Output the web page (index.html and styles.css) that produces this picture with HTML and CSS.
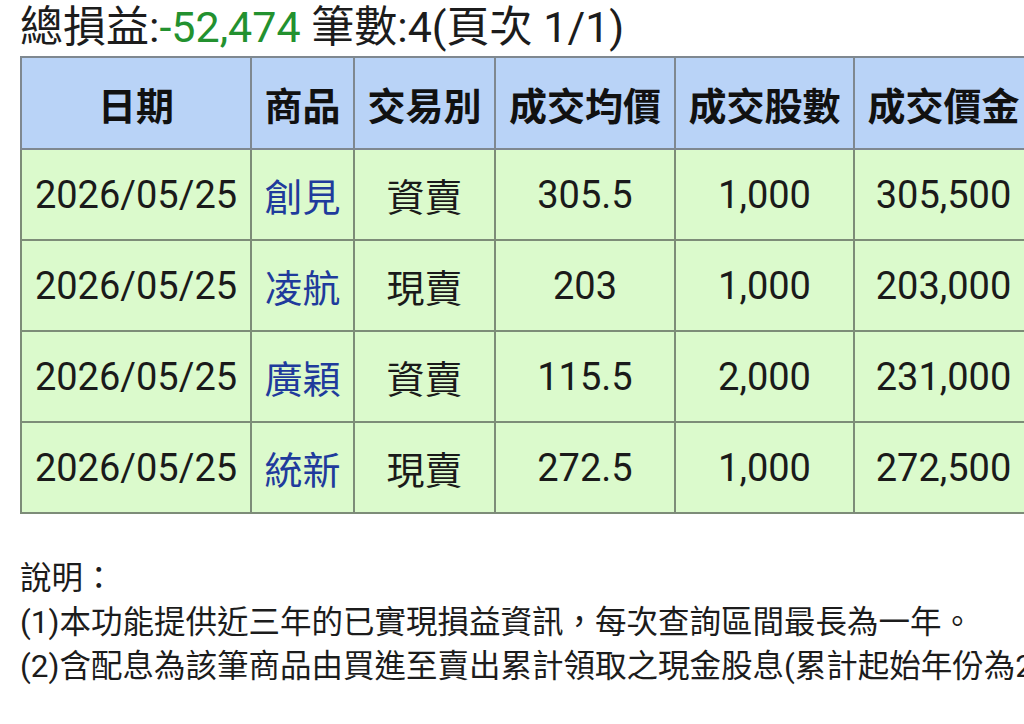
FILE: index.html
```html
<!DOCTYPE html>
<html lang="zh-Hant">
<head>
<meta charset="utf-8">
<title>已實現損益</title>
<link rel="stylesheet" href="styles.css">
</head>
<body>
<div class="page">
  <div class="summary">總損益:<span class="loss">-52,474</span> 筆數:4(頁次 1/1)</div>
  <table class="trades">
    <colgroup>
      <col class="c-date"><col class="c-name"><col class="c-type"><col class="c-price"><col class="c-qty"><col class="c-amt">
    </colgroup>
    <thead>
      <tr><th>日期</th><th>商品</th><th>交易別</th><th>成交均價</th><th>成交股數</th><th>成交價金</th></tr>
    </thead>
    <tbody>
      <tr><td>2026/05/25</td><td><a class="stock">創見</a></td><td>資賣</td><td>305.5</td><td>1,000</td><td>305,500</td></tr>
      <tr><td>2026/05/25</td><td><a class="stock">凌航</a></td><td>現賣</td><td>203</td><td>1,000</td><td>203,000</td></tr>
      <tr><td>2026/05/25</td><td><a class="stock">廣穎</a></td><td>資賣</td><td>115.5</td><td>2,000</td><td>231,000</td></tr>
      <tr><td>2026/05/25</td><td><a class="stock">統新</a></td><td>現賣</td><td>272.5</td><td>1,000</td><td>272,500</td></tr>
    </tbody>
  </table>
  <div class="notes">
    <p>說明：</p>
    <p>(1)本功能提供近三年的已實現損益資訊，每次查詢區間最長為一年。</p>
    <p>(2)含配息為該筆商品由買進至賣出累計領取之現金股息(累計起始年份為2</p>
  </div>
</div>
</body>
</html>
```

FILE: styles.css
```css
html, body {
  margin: 0;
  padding: 0;
  background: #ffffff;
  overflow: hidden;
}

body {
  font-family: Roboto, "Noto Sans CJK TC", sans-serif;
  color: #1a1a1a;
}

.page {
  width: 1060px;
  padding: 0 0 0 20px;
}

.summary {
  font-size: 43px;
  line-height: 54px;
  height: 56px;
  white-space: nowrap;
  color: #1c1c1c;
}

.loss {
  color: #23912f;
}

.trades {
  border-collapse: collapse;
  table-layout: fixed;
  width: 1012px;
  font-size: 38px;
}

.c-date { width: 230px; }
.c-name { width: 103px; }
.c-type { width: 141px; }
.c-price { width: 180px; }
.c-qty { width: 179px; }
.c-amt { width: 179px; }

.trades th,
.trades td {
  border: 2px solid #7d8c78;
  text-align: center;
  vertical-align: middle;
  padding: 0;
  white-space: nowrap;
}

.trades th {
  background: #b9d3f7;
  font-weight: 700;
  color: #111111;
  height: 90px;
  border-color: #7f8890;
}

.trades td {
  background: #dbfacc;
  height: 89px;
}

.stock {
  color: #1f3b9c;
  text-decoration: none;
}

.notes {
  margin-top: 43px;
  font-size: 31.5px;
  line-height: 44px;
  color: #1c1c1c;
  white-space: nowrap;
}

.notes p {
  margin: 0;
}
```
